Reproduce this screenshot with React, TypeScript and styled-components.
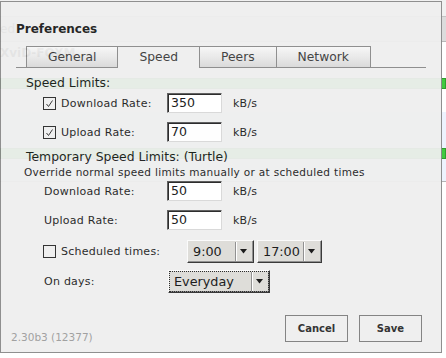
import React from 'react';
import styled, { createGlobalStyle } from 'styled-components';

const Global = createGlobalStyle`
  html, body { margin: 0; padding: 0; background: #fff; }
  body { font-family: "DejaVu Sans", Verdana, sans-serif; color: #1c1c1c; }
  * { box-sizing: border-box; }
`;

const Page = styled.div`
  position: relative;
  width: 446px;
  height: 358px;
  overflow: hidden;
  background: #fff;
`;

const Toolbar = styled.div`
  height: 17px;
  background: #f1f1f1;
  border-bottom: 1px solid #c4c4c4;
`;

const FilterBar = styled.div`
  height: 25px;
  background: #dcdcdc;
  border-bottom: 1px solid #b8b8b8;
  display: flex;
  align-items: center;
  white-space: nowrap;
  font-size: 12px;
  color: #333;
  overflow: hidden;
`;

const TorrentRow = styled.div<{ $alt?: boolean }>`
  height: 70px;
  padding-top: 4px;
  background: ${p => (p.$alt ? '#edf3fe' : '#fff')};
  border-bottom: ${p => (p.$alt ? '1px solid #b4b4b4' : 'none')};
`;

const TorrentName = styled.div`
  font-size: 12px;
  font-weight: bold;
  line-height: 14px;
  white-space: nowrap;
  color: #222;
`;

const Progress = styled.div`
  margin-top: 18px;
  height: 11px;
  background: #41c940;
  border: 1px solid #2f9e2f;
`;

const Dialog = styled.div`
  position: absolute;
  left: 0;
  top: 1px;
  width: 442px;
  height: 352px;
  border: 1px solid #8a8a8a;
  background: #efefef;
  opacity: 0.95;
  display: flex;
  flex-direction: column;
`;

const Title = styled.h1`
  margin: 19px 0 0 15px;
  font-size: 12px;
  font-weight: bold;
  line-height: 16px;
  color: #1c1c1c;
`;

const TabBar = styled.div`
  margin: 9px 15px 0 15px;
  padding-left: 10px;
  display: flex;
  border-bottom: 1px solid #8a8a8a;
`;

const Tab = styled.div<{ $active?: boolean }>`
  padding: 0 21px;
  margin-right: -1px;
  margin-bottom: ${p => (p.$active ? '-1px' : '0')};
  height: ${p => (p.$active ? '22px' : '21px')};
  border: 1px solid #8a8a8a;
  border-bottom: none;
  background: ${p => (p.$active ? '#efefef' : 'linear-gradient(#f7f7f7, #d9d9d9)')};
  font-size: 12.3px;
  line-height: 20px;
  color: #3a3a3a;
  position: relative;
  z-index: ${p => (p.$active ? 1 : 0)};
`;

const Content = styled.div`
  padding-left: 25px;
  display: flex;
  flex-direction: column;
`;

const Heading = styled.div<{ $mt: number }>`
  margin-top: ${p => p.$mt}px;
  font-size: 12.4px;
  line-height: 16px;
  color: #1c1c1c;
`;

const Note = styled.div`
  margin-left: -2px;
  font-size: 10.5px;
  letter-spacing: 0.32px;
  line-height: 14px;
  color: #1c1c1c;
  white-space: nowrap;
`;

const Row = styled.div<{ $mt: number; $h?: number }>`
  margin-top: ${p => p.$mt}px;
  margin-left: 17px;
  height: ${p => p.$h ?? 20}px;
  display: flex;
  align-items: center;
`;

const LabelCell = styled.div`
  width: 124px;
  display: flex;
  align-items: center;
  gap: 5px;
  font-size: 11px;
  letter-spacing: 0.25px;
  color: #1c1c1c;
  white-space: nowrap;
`;

const PlainLabel = styled.span`
  padding-left: 1px;
`;

const Box = styled.span`
  width: 13px;
  height: 13px;
  border: 1px solid #2a2a2a;
  display: inline-flex;
  align-items: center;
  justify-content: center;
`;

const TextInput = styled.div`
  width: 55px;
  height: 20px;
  background: #fff;
  border: 1px solid;
  border-color: #5a5a5a #d8d8d8 #d8d8d8 #5a5a5a;
  box-shadow: inset 1px 1px 0 #222;
  padding-left: 3px;
  font-size: 12.5px;
  line-height: 18px;
  color: #111;
`;

const Unit = styled.span`
  margin-left: 11px;
  font-size: 11px;
  letter-spacing: 0.25px;
  color: #1c1c1c;
`;

const Selects = styled.div<{ $ml: number }>`
  margin-left: ${p => p.$ml}px;
  display: flex;
  gap: 3px;
`;

const Select = styled.div<{ $w: number }>`
  width: ${p => p.$w}px;
  height: 23px;
  display: flex;
  background: #dddcd8;
  border: 1px solid;
  border-color: #fbfbfb #303030 #303030 #fbfbfb;
  box-shadow: inset -1px -1px 0 #8c8c8c;
  font-size: 12.8px;
  color: #111;
`;

const SelectInner = styled.div<{ $focus?: boolean }>`
  flex: 1;
  display: flex;
  margin: 1px;
  outline: ${p => (p.$focus ? '1px dotted #222' : 'none')};
`;

const SelectText = styled.div`
  flex: 1;
  padding-left: 4px;
  line-height: 19px;
`;

const SelectArrow = styled.div`
  width: 17px;
  border-left: 1px solid #8c8c8c;
  box-shadow: inset 1px 0 0 #fff;
  display: flex;
  align-items: center;
  justify-content: center;
`;

const Footer = styled.div`
  margin-top: auto;
  padding: 0 19px 8px 10px;
  display: flex;
  align-items: flex-end;
`;

const Version = styled.div`
  flex: 1;
  font-size: 10.5px;
  line-height: 14px;
  color: #9c9c9c;
`;

const Buttons = styled.div`
  display: flex;
  gap: 11px;
  margin-bottom: 2px;
`;

const Button = styled.div`
  width: 63px;
  height: 27px;
  border: 1px solid #7e7e7e;
  display: flex;
  align-items: center;
  justify-content: center;
  font-size: 10px;
  font-weight: bold;
  color: #2a2a2a;
`;

const Check = () => (
  <Box>
    <svg width="11" height="11" viewBox="0 0 11 11">
      <path d="M2.5 6 L4.5 8.5 L8.5 2.5" fill="none" stroke="#333" strokeWidth="1" />
    </svg>
  </Box>
);

const Arrow = () => (
  <svg width="8" height="5" viewBox="0 0 8 5">
    <path d="M0 0 H7 L3.5 4.5 Z" fill="#111" />
  </svg>
);

const CheckRow = ({ checked, label }: { checked: boolean; label: string }) => (
  <LabelCell>
    {checked ? <Check /> : <Box />}
    <span>{label}</span>
  </LabelCell>
);

const Dropdown = ({ w, value, focus }: { w: number; value: string; focus?: boolean }) => (
  <Select $w={w}>
    <SelectInner $focus={focus}>
      <SelectText>{value}</SelectText>
      <SelectArrow>
        <Arrow />
      </SelectArrow>
    </SelectInner>
  </Select>
);

export default function App() {
  return (
    <Page>
      <Global />
      <Toolbar />
      <FilterBar>
        <span>ed</span>
      </FilterBar>
      <TorrentRow>
        <TorrentName>XviD-FOXM</TorrentName>
        <Progress />
      </TorrentRow>
      <TorrentRow $alt>
        <TorrentName>&nbsp;</TorrentName>
        <Progress />
      </TorrentRow>

      <Dialog>
        <Title>Preferences</Title>
        <TabBar>
          <Tab>General</Tab>
          <Tab $active>Speed</Tab>
          <Tab>Peers</Tab>
          <Tab>Network</Tab>
        </TabBar>
        <Content>
          <Heading $mt={7}>Speed Limits:</Heading>
          <Row $mt={2}>
            <CheckRow checked label="Download Rate:" />
            <TextInput>350</TextInput>
            <Unit>kB/s</Unit>
          </Row>
          <Row $mt={9}>
            <CheckRow checked label="Upload Rate:" />
            <TextInput>70</TextInput>
            <Unit>kB/s</Unit>
          </Row>
          <Heading $mt={7}>Temporary Speed Limits: (Turtle)</Heading>
          <Note>Override normal speed limits manually or at scheduled times</Note>
          <Row $mt={2}>
            <LabelCell>
              <PlainLabel>Download Rate:</PlainLabel>
            </LabelCell>
            <TextInput>50</TextInput>
            <Unit>kB/s</Unit>
          </Row>
          <Row $mt={9}>
            <LabelCell>
              <PlainLabel>Upload Rate:</PlainLabel>
            </LabelCell>
            <TextInput>50</TextInput>
            <Unit>kB/s</Unit>
          </Row>
          <Row $mt={10} $h={23}>
            <CheckRow checked={false} label="Scheduled times:" />
            <Selects $ml={20}>
              <Dropdown w={67} value="9:00" />
              <Dropdown w={65} value="17:00" />
            </Selects>
          </Row>
          <Row $mt={7} $h={23}>
            <LabelCell>
              <PlainLabel>On days:</PlainLabel>
            </LabelCell>
            <Selects $ml={1}>
              <Dropdown w={102} value="Everyday" focus />
            </Selects>
          </Row>
        </Content>
        <Footer>
          <Version>2.30b3 (12377)</Version>
          <Buttons>
            <Button>Cancel</Button>
            <Button>Save</Button>
          </Buttons>
        </Footer>
      </Dialog>
    </Page>
  );
}
